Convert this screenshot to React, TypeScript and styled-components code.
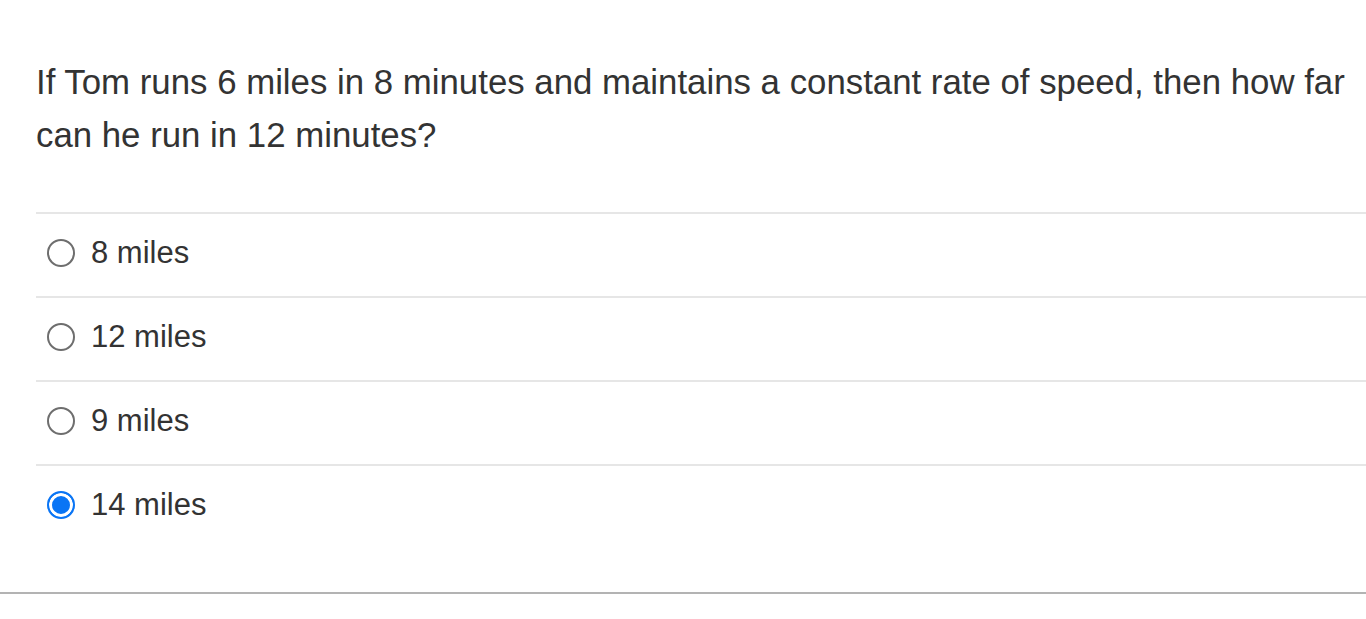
import React from "react";
import styled, { createGlobalStyle } from "styled-components";

const Global = createGlobalStyle`
  html, body { margin: 0; padding: 0; background: #ffffff; }
  body { font-family: "Liberation Sans", Arial, sans-serif; color: #333333; }
`;

const Page = styled.div`
  width: 1366px;
  height: 619px;
  overflow: hidden;
  display: flex;
  flex-direction: column;
`;

const Question = styled.div`
  padding: 0 0 0 36px;
`;

const Prompt = styled.p`
  margin: 0;
  padding-top: 55px;
  padding-right: 8px;
  font-size: 34.8px;
  line-height: 53px;
  color: #333333;
`;

const Options = styled.div`
  margin-top: 51px;
  display: flex;
  flex-direction: column;
`;

const Option = styled.label`
  box-sizing: border-box;
  display: flex;
  align-items: center;
  height: 84px;
  border-top: 2px solid #e6e6e6;
  padding: 0 0 4px 11px;
  gap: 16px;
  font-size: 31px;
  color: #333333;
  cursor: pointer;
`;

const Radio = styled.input`
  appearance: none;
  -webkit-appearance: none;
  box-sizing: border-box;
  width: 28px;
  height: 28px;
  margin: 0 0 1px;
  border-radius: 50%;
  border: 2px solid #6e6e6e;
  background: #ffffff;
  flex-shrink: 0;

  &:checked {
    border-color: #0a75f5;
    background: #0a75f5;
    box-shadow: inset 0 0 0 3px #ffffff;
  }
`;

const Footer = styled.div`
  margin-top: 44px;
  border-top: 2px solid #b3b3b3;
  box-shadow: 0 -10px 8px -6px #f4f4f4;
`;

const choices = ["8 miles", "12 miles", "9 miles", "14 miles"];

export default function App() {
  const [sel, setSel] = React.useState(3);
  return (
    <Page>
      <Global />
      <Question>
        <Prompt>
          If Tom runs 6 miles in 8 minutes and maintains a constant rate of speed, then how far can he run in 12 minutes?
        </Prompt>
        <Options>
          {choices.map((c, i) => (
            <Option key={c}>
              <Radio type="radio" name="q" checked={sel === i} onChange={() => setSel(i)} />
              {c}
            </Option>
          ))}
        </Options>
      </Question>
      <Footer />
    </Page>
  );
}
